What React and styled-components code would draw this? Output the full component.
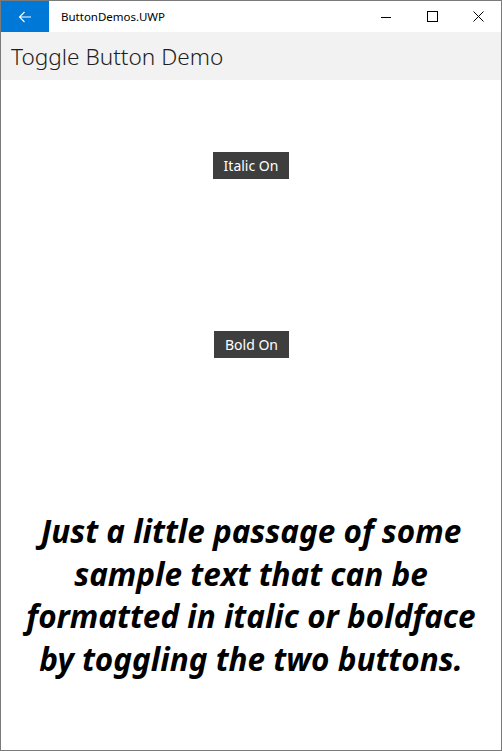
import React, { useState } from 'react'
import styled, { createGlobalStyle } from 'styled-components'

const GlobalStyle = createGlobalStyle`
  html, body {
    margin: 0;
    padding: 0;
    background: #ffffff;
  }
  body {
    font-family: "Noto Sans", "Open Sans", sans-serif;
  }
`

const Window = styled.div`
  width: 502px;
  height: 751px;
  box-sizing: border-box;
  border: 1px solid #7a7a7a;
  display: flex;
  flex-direction: column;
  background: #ffffff;
  overflow: hidden;
`

const TitleBar = styled.div`
  height: 31px;
  display: flex;
  align-items: center;
  background: #ffffff;
  flex-shrink: 0;
`

const BackButton = styled.div`
  width: 48px;
  height: 31px;
  background: #0078d7;
  display: flex;
  align-items: center;
  justify-content: center;
`

const AppName = styled.span`
  margin-left: 12px;
  font-family: "Noto Sans", sans-serif;
  font-size: 11.5px;
  color: #000000;
  flex: 1;
`

const Caption = styled.div`
  width: 46px;
  height: 31px;
  display: flex;
  align-items: center;
  justify-content: center;
`

const Header = styled.div`
  height: 48px;
  background: #f2f2f2;
  display: flex;
  align-items: center;
  padding-left: 10px;
  flex-shrink: 0;
`

const PageTitle = styled.h1`
  margin: 0;
  font-family: "Noto Sans", sans-serif;
  font-weight: 300;
  font-size: 22.6px;
  color: #1f1f1f;
`

const Content = styled.div`
  flex: 1;
  display: flex;
  flex-direction: column;
  align-items: center;
  padding-top: 72px;
`

const ToggleButton = styled.button`
  height: 27px;
  margin-top: ${p => p.$gap || 0}px;
  margin-left: ${p => p.$shift || 0}px;
  padding: 0 11px 1px;
  border: none;
  background: #3e3e3e;
  color: #ffffff;
  font-family: "Noto Sans", sans-serif;
  font-size: 14px;
  cursor: pointer;
`

const Passage = styled.p`
  margin: 152px 0 0;
  padding: 0 18px;
  text-align: center;
  font-family: "Noto Sans", sans-serif;
  font-size: 31.5px;
  line-height: 42.7px;
  font-style: ${p => (p.$italic ? 'italic' : 'normal')};
  font-weight: ${p => (p.$bold ? 700 : 400)};
  color: #000000;
`

export default function App() {
  const [italic, setItalic] = useState(true)
  const [bold, setBold] = useState(true)

  return (
    <>
      <GlobalStyle />
      <Window>
        <TitleBar>
          <BackButton>
            <svg width="14" height="12" viewBox="0 0 14 12">
              <path d="M13 6H1.5M6.5 1L1.5 6l5 5" stroke="#fff" strokeWidth="1.1" fill="none" />
            </svg>
          </BackButton>
          <AppName>ButtonDemos.UWP</AppName>
          <Caption>
            <svg width="10" height="10" viewBox="0 0 10 10">
              <path d="M0 5.5h10" stroke="#000" strokeWidth="1" />
            </svg>
          </Caption>
          <Caption>
            <svg width="11" height="11" viewBox="0 0 11 11">
              <rect x="0.5" y="0.5" width="10" height="10" stroke="#000" strokeWidth="1" fill="none" />
            </svg>
          </Caption>
          <Caption>
            <svg width="11" height="11" viewBox="0 0 11 11">
              <path d="M0.5 0.5l10 10M10.5 0.5l-10 10" stroke="#000" strokeWidth="1" />
            </svg>
          </Caption>
        </TitleBar>
        <Header>
          <PageTitle>Toggle Button Demo</PageTitle>
        </Header>
        <Content>
          <ToggleButton onClick={() => setItalic(!italic)}>
            {italic ? 'Italic On' : 'Italic Off'}
          </ToggleButton>
          <ToggleButton $gap={152} $shift={1} onClick={() => setBold(!bold)}>
            {bold ? 'Bold On' : 'Bold Off'}
          </ToggleButton>
          <Passage $italic={italic} $bold={bold}>
            Just a little passage of some sample text that can be formatted in italic or boldface by toggling the two buttons.
          </Passage>
        </Content>
      </Window>
    </>
  )
}
